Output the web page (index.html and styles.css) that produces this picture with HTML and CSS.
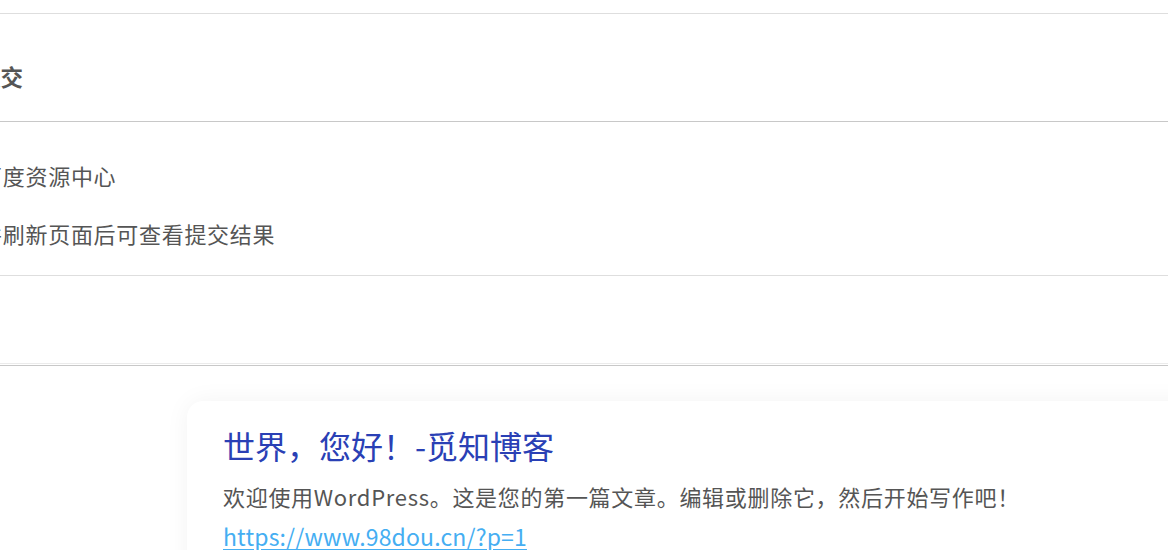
FILE: index.html
```html
<!DOCTYPE html>
<html lang="zh-CN">
<head>
<meta charset="utf-8">
<title>百度推送</title>
<link rel="stylesheet" href="styles.css">
</head>
<body>
<div class="page">
  <div class="modal">
    <div class="modal-top"></div>
    <div class="modal-header"><h3 class="modal-title">百度推送提交</h3></div>
    <div class="modal-body">
      <p class="line">推送至百度资源中心</p>
      <p class="line">提交后并刷新页面后可查看提交结果</p>
    </div>
    <div class="modal-footer"></div>
    <div class="modal-end"></div>
  </div>
  <div class="content">
    <article class="card">
      <h2 class="card-title">世界，您好！-觅知博客</h2>
      <p class="card-text">欢迎使用WordPress。这是您的第一篇文章。编辑或删除它，然后开始写作吧！</p>
      <a class="card-link" href="#">https://www.98dou.cn/?p=1</a>
    </article>
  </div>
</div>
</body>
</html>
```

FILE: styles.css
```css
html, body {
  margin: 0;
  padding: 0;
  background: #fff;
  overflow: hidden;
}
body {
  font-family: "Noto Sans CJK SC", "Noto Sans", sans-serif;
  color: #555;
}
.page {
  width: 1168px;
  height: 550px;
  overflow: hidden;
}
.modal {
  margin-left: -400px;
  width: 1600px;
}
.modal-top {
  height: 13px;
  border-bottom: 1px solid #dedede;
}
.modal-header {
  padding: 47px 0 30px 288px;
  border-bottom: 1px solid #c8c8c8;
}
.modal-title {
  margin: 0;
  font-size: 22.5px;
  line-height: 30px;
  font-weight: 700;
  color: #555;
}
.modal-body {
  padding: 38px 0 27px 312px;
  border-bottom: 1px solid #dedede;
}
.line {
  margin: 0;
  font-size: 22px;
  line-height: 30px;
  letter-spacing: 0.7px;
  color: #555;
  white-space: nowrap;
}
.line + .line {
  margin-top: 28px;
}
.modal-footer {
  height: 87px;
  border-bottom: 1px solid #ebebeb;
}
.modal-end {
  margin-top: 1px;
  border-top: 1px solid #c8c8c8;
}
.content {
  padding: 35px 0 0 187px;
}
.card {
  width: 1100px;
  height: 200px;
  background: #fff;
  border-radius: 16px;
  box-shadow: 0 0 24px rgba(0, 0, 0, 0.05);
  padding: 24px 36px 0;
  box-sizing: border-box;
}
.card-title {
  margin: 0;
  font-size: 32px;
  line-height: 40px;
  font-weight: 400;
  color: #2a40b5;
}
.card-text {
  margin: 16px 0 0;
  font-size: 22px;
  line-height: 30px;
  letter-spacing: 0.7px;
  color: #555;
  white-space: nowrap;
}
.card-link {
  display: inline-block;
  margin-top: 10px;
  font-size: 23px;
  line-height: 30px;
  letter-spacing: 0.15px;
  color: #45aef2;
  text-decoration: underline;
  text-underline-offset: 3px;
}
```
